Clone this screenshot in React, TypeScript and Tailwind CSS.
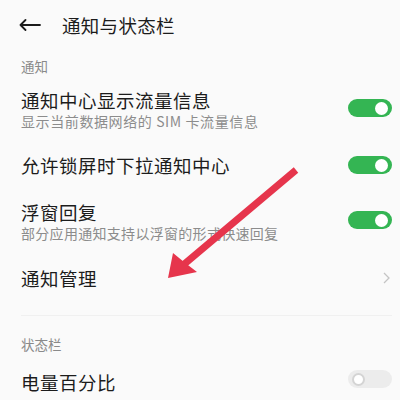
import React from "react";

type ToggleProps = { on: boolean; className?: string };

const Toggle = ({ on, className = "" }: ToggleProps) => {
  if (on) {
    return (
      <div className={`w-[44px] h-[18px] rounded-full bg-[#34b553] flex items-center justify-end pr-[4px] shrink-0 ${className}`}>
        <div className="w-[13px] h-[13px] rounded-full bg-white" />
      </div>
    );
  }
  return (
    <div className={`w-[44px] h-[18px] rounded-full bg-[#ececec] flex items-center pl-[4px] shrink-0 ${className}`}>
      <div className="w-[13px] h-[13px] rounded-full bg-white border-[2px] border-[#d4d4d4]" />
    </div>
  );
};

const App = () => {
  return (
    <div
      className="relative w-[400px] h-[400px] overflow-hidden bg-[#fafafa] text-[#1c1c1c]"
      style={{ fontFamily: '"Noto Sans CJK SC", "Noto Sans", sans-serif' }}
    >
      {/* header */}
      <div className="h-[50px] flex items-center pl-[19px]">
        <svg width="22" height="12" viewBox="0 0 22 12" fill="none" stroke="#1c1c1c" strokeWidth="1.8" strokeLinecap="round" strokeLinejoin="round">
          <path d="M21 6H1.5M6.5 1L1.5 6l5 5" />
        </svg>
        <span className="ml-[21px] text-[18.5px] leading-[24px] tracking-[0.3px]">通知与状态栏</span>
      </div>

      <div className="pl-[21px] pr-[8px]">
        <div className="pt-[9px] pb-[9px] text-[13.5px] leading-[14px] text-[#8a8a8a]">通知</div>

        <div className="h-[56px] flex items-center">
          <div className="flex-1">
            <div className="text-[18.5px] leading-[22px] tracking-[0.5px]">通知中心显示流量信息</div>
            <div className="text-[14px] leading-[20px] text-[#8c8c8c] tracking-[0.6px]">显示当前数据网络的 SIM 卡流量信息</div>
          </div>
          <Toggle on className="mb-[4px]" />
        </div>

        <div className="h-[54px] flex items-center">
          <div className="flex-1 text-[18.5px] leading-[22px] tracking-[0.5px]">允许锁屏时下拉通知中心</div>
          <Toggle on />
        </div>

        <div className="h-[60px] flex items-center">
          <div className="flex-1">
            <div className="text-[18.5px] leading-[22px] tracking-[0.5px]">浮窗回复</div>
            <div className="text-[14px] leading-[20px] text-[#8c8c8c] tracking-[0.3px]">部分应用通知支持以浮窗的形式快速回复</div>
          </div>
          <Toggle on className="mb-[4px]" />
        </div>

        <div className="h-[52px] flex items-center">
          <div className="flex-1 text-[18.5px] leading-[22px] tracking-[0.5px]">通知管理</div>
          <svg width="7" height="12" viewBox="0 0 7 12" fill="none" stroke="#c4c4c4" strokeWidth="1.3" className="mr-[2px]">
            <path d="M1 1l5 5-5 5" />
          </svg>
        </div>

        <div className="mt-[11px] border-t border-[#f0f0f0]" />

        <div className="pt-[21px] pb-[10px] text-[13.5px] leading-[14px] text-[#8a8a8a]">状态栏</div>

        <div className="h-[42px] flex items-center">
          <div className="flex-1 text-[18.5px] leading-[22px] tracking-[0.5px]">电量百分比</div>
          <Toggle on={false} className="mb-[6px]" />
        </div>
      </div>

      {/* red annotation arrow */}
      <svg className="absolute left-0 top-0 pointer-events-none" width="400" height="400" viewBox="0 0 400 400">
        <line x1="296" y1="170" x2="182" y2="266" stroke="#e6354c" strokeWidth="7" />
        <polygon points="168,278 173,253 184,262 197,272" fill="#e6354c" />
      </svg>
    </div>
  );
};

export default App;
